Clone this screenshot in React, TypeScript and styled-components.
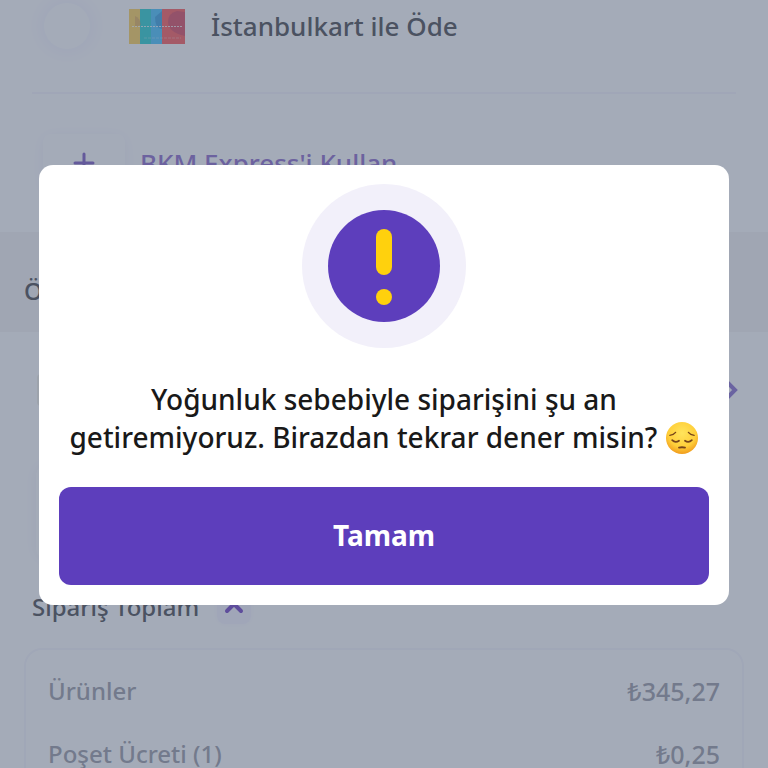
import React from "react";
import styled, { createGlobalStyle } from "styled-components";

const GlobalStyle = createGlobalStyle`
  * { box-sizing: border-box; }
  body {
    margin: 0;
    background: #fff;
    font-family: "Noto Sans", "Open Sans", sans-serif;
    font-weight: 500;
    overflow: hidden;
  }
  button { font: inherit; border: 0; margin: 0; cursor: pointer; }
  p, h2, h3, dl, dt, dd { margin: 0; }
`;

const Page = styled.main`
  height: 100vh;
  overflow: hidden;
`;

const PaymentSection = styled.section`
  padding: 0 32px 40px;
`;

const PaymentOption = styled.label`
  display: flex;
  align-items: center;
  height: 94px;
  padding: 0 12px 40px;
  border-bottom: 2px solid #f6f5fd;
  color: #4c4c50;
  font-size: 26px;
  line-height: 36px;
`;

const Radio = styled.input`
  appearance: none;
  flex: none;
  width: 46px;
  height: 46px;
  margin: 0 39px 0 0;
  border-radius: 50%;
  background: #fff;
  box-shadow: 0 0 20px 4px #f4f2fd;
`;

const CardArt = styled.svg`
  flex: none;
  width: 56px;
  height: 35px;
  margin-right: 26px;
`;

const AddMethod = styled.button`
  display: flex;
  align-items: center;
  gap: 15px;
  margin-top: 40px;
  padding: 0 11px;
  background: none;
  color: #8e6ccc;
  font-size: 26px;
  line-height: 36px;
`;

const AddBox = styled.span`
  display: flex;
  align-items: center;
  justify-content: center;
  width: 82px;
  height: 58px;
  border-radius: 8px;
  background: #fff;
  box-shadow: 0 2px 16px #f3f1fa;
`;

const SectionBand = styled.h2`
  height: 100px;
  padding: 0 24px;
  background: #f6f4f5;
  color: #4c4c50;
  font-size: 24px;
  font-weight: 500;
  line-height: 118px;
`;

const LinkRow = styled.div`
  display: flex;
  align-items: center;
  justify-content: space-between;
  height: 116px;
  padding: 0 30px 0 37px;
`;

const Thumb = styled.span`
  width: 48px;
  height: 32px;
  border-radius: 4px;
  background: #f1efe6;
`;

const NoteCard = styled.div`
  height: 96px;
  margin: 16px 48px 0 36px;
  border-radius: 12px;
  background: #fff;
  box-shadow: 0 0 16px #f2f0f8;
`;

const SummaryHead = styled.div`
  display: flex;
  align-items: center;
  gap: 18px;
  height: 88px;
  padding: 6px 32px 0;
  color: #4c4c50;
`;

const SummaryTitle = styled.h3`
  font-size: 24px;
  font-weight: 500;
  line-height: 32px;
`;

const Collapse = styled.button`
  display: flex;
  align-items: center;
  justify-content: center;
  width: 34px;
  height: 34px;
  padding: 0;
  border-radius: 8px;
  background: #f7f5fe;
  box-shadow: 0 0 6px #f7f5fe;
`;

const SummaryCard = styled.dl`
  margin: 0 24px;
  padding: 24px 22px;
  border: 2px solid #f7f6fc;
  border-radius: 18px;
`;

const SummaryLine = styled.div`
  display: flex;
  justify-content: space-between;
  height: 63px;
  color: #9c9ca6;
  font-size: 24px;
  line-height: 34px;
`;

const Amount = styled.dd`
  font-size: 25px;
`;

const Overlay = styled.div`
  position: fixed;
  inset: 0;
  display: flex;
  align-items: center;
  justify-content: center;
  padding: 2px 39px 0;
  background: rgba(74, 88, 114, 0.5);
`;

const Dialog = styled.div`
  display: flex;
  flex-direction: column;
  align-items: center;
  width: 100%;
  padding: 19px 20px 20px;
  border-radius: 14px;
  background: #fff;
`;

const AlertMark = styled.svg`
  width: 164px;
  height: 164px;
`;

const Message = styled.p`
  margin: 32px 0 31px;
  color: #191919;
  font-size: 28px;
  line-height: 38px;
  text-align: center;
`;

const Emoji = styled.svg`
  width: 34px;
  height: 34px;
  vertical-align: -7px;
`;

const Confirm = styled.button`
  width: 100%;
  height: 98px;
  padding: 0 0 2px;
  border-radius: 12px;
  background: #5d3ebc;
  color: #fff;
  font-size: 28px;
  font-weight: 700;
`;

const summary = [
  { label: "Ürünler", amount: "₺345,27" },
  { label: "Poşet Ücreti (1)", amount: "₺0,25" },
];

function PensiveFace() {
  return (
    <Emoji viewBox="0 0 34 34" role="img" aria-label="😔">
      <defs>
        <radialGradient id="face" cx="50%" cy="35%" r="66%">
          <stop offset="0" stopColor="#ffe45c" />
          <stop offset="0.65" stopColor="#ffcf3a" />
          <stop offset="1" stopColor="#f09a1c" />
        </radialGradient>
      </defs>
      <circle cx="17" cy="17" r="16" fill="url(#face)" />
      <g fill="none" stroke="#77451a" strokeLinecap="round">
        <path d="M4.8 14.3Q8.8 13.9 10.6 11.4M29.2 14.3Q25.2 13.9 23.4 11.4" strokeWidth="1.3" />
        <path d="M7.2 19.2Q10.4 22.4 14 19.7M26.8 19.2Q23.6 22.4 20 19.7" strokeWidth="1.8" />
        <path d="M14 26.6Q17 25.9 20 26.6" strokeWidth="1.8" />
      </g>
    </Emoji>
  );
}

export default function App() {
  return (
    <>
      <GlobalStyle />
      <Page>
        <PaymentSection>
          <PaymentOption>
            <Radio type="radio" name="payment" />
            <CardArt viewBox="0 0 56 35" aria-hidden="true">
              <path fill="#ffd25a" d="M0 0h12v35H0z" />
              <path fill="#2ad0d0" d="M11 0h12v35H11z" />
              <path fill="#4ac4ff" d="M22 0h12v35H22z" />
              <path fill="#ff5c5c" d="M33 0h23v35H33z" />
              <path fill="#d04864" d="M56 3v24q-17-4-17-14 0-9 9-11z" opacity=".75" />
              <path fill="#2f8ed0" d="M26 8l7-6v18q-7 0-7-12z" opacity=".6" />
              <path fill="#c08a58" d="M6 7q5 2 6 9l-6 2z" opacity=".4" />
              <path stroke="#fff" strokeWidth="1" strokeDasharray="2 1" d="M3 17.5h51" opacity=".8" />
              <path stroke="#fff" strokeWidth="1" strokeDasharray="3 1" d="M15 29h37" opacity=".3" />
            </CardArt>
            İstanbulkart ile Öde
          </PaymentOption>
          <AddMethod type="button">
            <AddBox>
              <svg width="22" height="22" viewBox="0 0 22 22" aria-hidden="true">
                <path d="M11 2v18M2 11h18" stroke="#7f5cc4" strokeWidth="3" strokeLinecap="round" />
              </svg>
            </AddBox>
            BKM Express'i Kullan
          </AddMethod>
        </PaymentSection>
        <SectionBand>Ö</SectionBand>
        <LinkRow>
          <Thumb />
          <svg width="18" height="24" viewBox="0 0 18 24" aria-hidden="true">
            <path d="M6 3l9 9-9 9" fill="none" stroke="#8a6fd0" strokeWidth="4" />
          </svg>
        </LinkRow>
        <NoteCard />
        <SummaryHead>
          <SummaryTitle>Sipariş Toplam</SummaryTitle>
          <Collapse type="button" aria-expanded="true" aria-label="Sipariş Toplam">
            <svg width="20" height="14" viewBox="0 0 20 14" aria-hidden="true">
              <path
                d="M3 11l7-7 7 7"
                fill="none"
                stroke="#7343c6"
                strokeWidth="4"
                strokeLinecap="round"
                strokeLinejoin="round"
              />
            </svg>
          </Collapse>
        </SummaryHead>
        <SummaryCard>
          {summary.map((line) => (
            <SummaryLine key={line.label}>
              <dt>{line.label}</dt>
              <Amount>{line.amount}</Amount>
            </SummaryLine>
          ))}
        </SummaryCard>
      </Page>
      <Overlay>
        <Dialog role="alertdialog" aria-modal="true" aria-describedby="alert-message">
          <AlertMark viewBox="0 0 164 164" aria-hidden="true">
            <circle cx="82" cy="82" r="82" fill="#f2f0fa" />
            <circle cx="82" cy="82" r="56" fill="#5d3ebc" />
            <rect x="74" y="45" width="16" height="46" rx="8" fill="#ffd10d" />
            <circle cx="82" cy="113" r="8" fill="#ffd10d" />
          </AlertMark>
          <Message id="alert-message">
            Yoğunluk sebebiyle siparişini şu an getiremiyoruz. Birazdan tekrar dener misin? <PensiveFace />
          </Message>
          <Confirm type="button">Tamam</Confirm>
        </Dialog>
      </Overlay>
    </>
  );
}
